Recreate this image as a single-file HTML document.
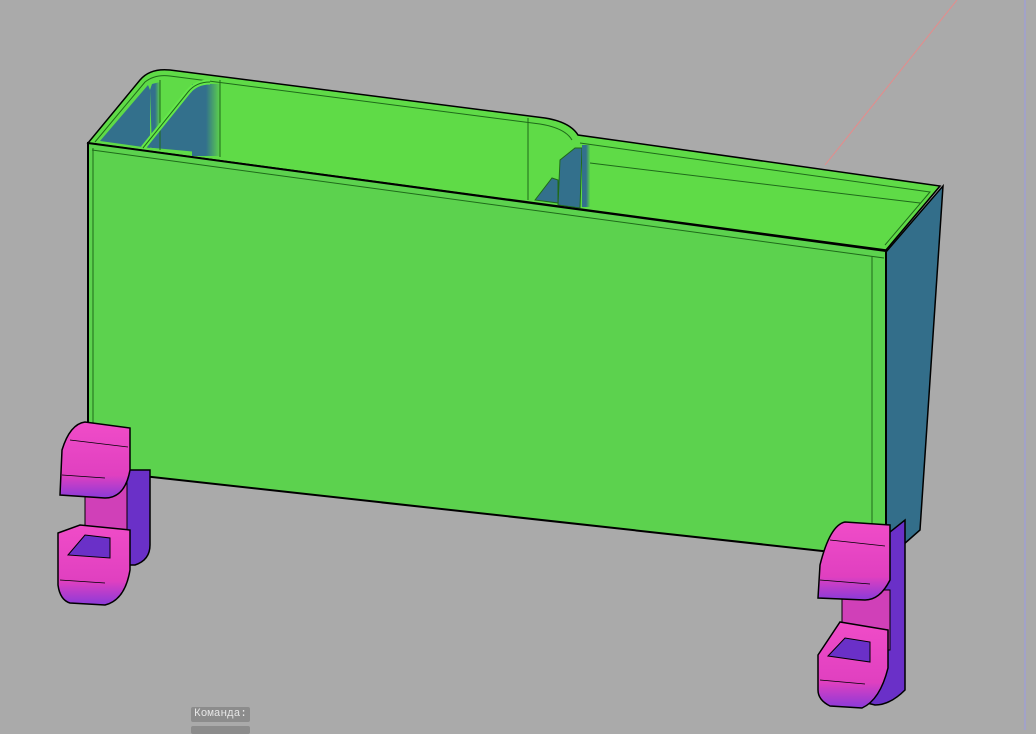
<!DOCTYPE html>
<html><head><meta charset="utf-8"><style>
html,body{margin:0;padding:0;background:#aaaaaa;width:1036px;height:730px;overflow:hidden;font-family:"Liberation Sans",sans-serif}
.cmd{position:absolute;left:191px;top:707px;width:59px;height:15px;background:#8c8c8c;border-radius:2px;color:#e8e8e8;font:11px "Liberation Mono","DejaVu Sans Mono",monospace;line-height:15px;text-align:center}
.cmd2{position:absolute;left:191px;top:726px;width:59px;height:8px;background:#8c8c8c;border-radius:2px}
</style></head><body>
<svg width="1036" height="730" style="position:absolute;left:0;top:0">
<defs>
<linearGradient id="bl" x1="0" x2="1"><stop offset="0" stop-color="#33708c"/><stop offset="0.5" stop-color="#33708c"/><stop offset="1" stop-color="#5cd24a"/></linearGradient>
<linearGradient id="mg" x1="0" y1="0" x2="0" y2="1"><stop offset="0" stop-color="#f04cc8"/><stop offset="0.7" stop-color="#e040c0"/><stop offset="1" stop-color="#8a3ad8"/></linearGradient>
</defs>
<line x1="825" y1="165" x2="957" y2="0" stroke="#e88a8a" stroke-width="1"/>
<line x1="1025" y1="0" x2="1025" y2="730" stroke="#9a9ae8" stroke-width="1"/>
<!-- right blue side -->
<polygon points="886,252 943,186 920,530 895,552 886,558" fill="#336e8a" stroke="#000" stroke-width="1.5"/>
<!-- top interior back wall -->
<path d="M88,143 L140,80 Q150,68 170,70 L545,118 Q570,122 578,135 L940,186 L886,250 Z" fill="#5fdb47" stroke="#000" stroke-width="1.5"/>
<path d="M95,142 L145,82 Q155,74 170,76 L540,124 Q565,128 572,140" fill="none" stroke="#1f6a1a" stroke-width="1"/>
<path d="M580,143 L930,192 L885,245" fill="none" stroke="#1f6a1a" stroke-width="1"/>
<path d="M590,163 L920,203" fill="none" stroke="#1f6a1a" stroke-width="1"/>
<!-- blue inner walls -->
<polygon points="100,141 148,85 150,90 150,148" fill="#33708c"/>
<polygon points="152,148 150,90 152,84 160,82 160,148" fill="url(#bl)"/>
<polygon points="143,147 185,98 198,86 198,152" fill="#33708c"/>
<rect x="192" y="84" width="28" height="72" fill="url(#bl)"/>
<line x1="220" y1="80" x2="220" y2="157" stroke="#1f6a1a"/>
<line x1="160" y1="80" x2="160" y2="150" stroke="#1f6a1a"/>
<path d="M143,148 L188,92 Q196,82 210,82" fill="none" stroke="#64e84a" stroke-width="5"/>
<path d="M143,148 L188,92 Q196,82 210,82" fill="none" stroke="#1f6a1a" stroke-width="1"/>
<line x1="528" y1="118" x2="528" y2="200" stroke="#1f6a1a"/>
<polygon points="535,200 552,178 558,180 558,203" fill="#33708c" stroke="#1f6a1a"/>
<polygon points="558,205 560,160 575,148 582,148 580,208" fill="#33708c" stroke="#1f6a1a"/>
<rect x="582" y="145" width="8" height="62" fill="url(#bl)"/>
<!-- front face -->
<polygon points="88,143 886,251 886,558 88,470" fill="#5cd24e" stroke="#000" stroke-width="2"/>
<line x1="92" y1="150" x2="884" y2="258" stroke="#1f6a1a"/>
<line x1="93" y1="148" x2="93" y2="470" stroke="#1f6a1a"/>
<rect x="872" y="258" width="14" height="300" fill="url(#bl)" opacity="0.0"/>
<line x1="872" y1="256" x2="872" y2="555" stroke="#1f6a1a"/>
<!-- left leg -->
<path d="M100,470 L150,470 L150,545 Q150,560 135,565 L100,565 Z" fill="#6a30c8" stroke="#000" stroke-width="1.5"/>
<rect x="85" y="470" width="42" height="70" fill="#d040b8" stroke="#000"/>
<path d="M62,450 Q70,424 85,422 L130,428 L130,470 Q125,498 105,498 L60,495 Z" fill="url(#mg)" stroke="#000" stroke-width="1.5"/>
<path d="M62,475 L105,478 M70,440 L128,447" stroke="#000" fill="none" stroke-width="0.8"/>
<path d="M58,533 L80,525 L130,530 L130,570 Q125,600 105,605 L70,603 Q60,600 58,585 Z" fill="url(#mg)" stroke="#000" stroke-width="1.5"/>
<polygon points="68,555 85,535 110,538 110,558" fill="#6a30c8" stroke="#000"/>
<path d="M60,580 L105,583" stroke="#000" stroke-width="0.8"/>
<!-- right leg -->
<path d="M855,560 L905,520 L905,690 Q890,705 875,705 L855,700 Z" fill="#6a30c8" stroke="#000" stroke-width="1.5"/>
<rect x="842" y="590" width="48" height="60" fill="#d040b8" stroke="#000"/>
<path d="M820,565 Q830,525 845,522 L890,525 L890,580 Q880,600 865,600 L818,598 Z" fill="url(#mg)" stroke="#000" stroke-width="1.5"/>
<path d="M820,580 L870,584 M830,540 L885,546" stroke="#000" fill="none" stroke-width="0.8"/>
<path d="M818,655 L840,622 L888,630 L888,668 Q880,700 862,708 L830,706 Q818,700 818,690 Z" fill="url(#mg)" stroke="#000" stroke-width="1.5"/>
<polygon points="828,656 845,638 870,642 870,662" fill="#6a30c8" stroke="#000"/>
<path d="M820,680 L865,684" stroke="#000" stroke-width="0.8"/>
</svg>
<div class="cmd">Команда:</div>
<div class="cmd2"></div>
</body></html>
